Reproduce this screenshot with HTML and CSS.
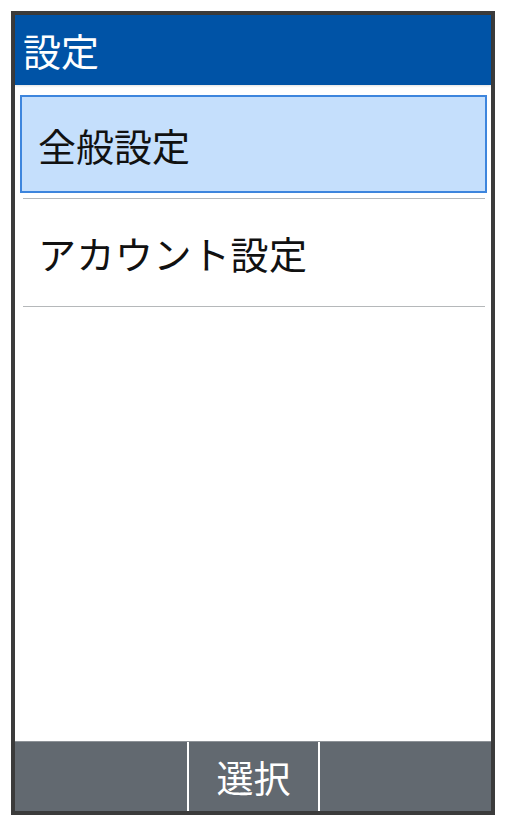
FILE: index.html
```html
<!DOCTYPE html>
<html lang="ja">
<head>
<meta charset="utf-8">
<link rel="stylesheet" href="styles.css">
</head>
<body>
<div class="frame">
  <div class="header">設定</div>
  <div class="list">
    <div class="item selected">全般設定</div>
    <div class="divider"></div>
    <div class="item">アカウント設定</div>
    <div class="divider"></div>
  </div>
  <div class="softkeys">
    <div class="key key-left"></div>
    <div class="key key-center">選択</div>
    <div class="key key-right"></div>
  </div>
</div>
</body>
</html>
```

FILE: styles.css
```css
html, body {
  margin: 0;
  padding: 0;
  background: #ffffff;
}
body {
  font-family: "Noto Sans CJK JP", "Noto Sans", sans-serif;
}
.frame {
  box-sizing: border-box;
  margin: 11px 0 0 11px;
  width: 484px;
  height: 804px;
  border: 4px solid #3b3b3b;
  display: flex;
  flex-direction: column;
  background: #ffffff;
}
.header {
  height: 70px;
  flex: none;
  background: #0053a6;
  color: #ffffff;
  font-size: 38px;
  line-height: 70px;
  padding-left: 8px;
  box-shadow: 0 1px 2px rgba(0,0,0,0.12);
}
.list {
  flex: 1;
  padding-top: 10px;
}
.item {
  color: #111111;
  font-size: 38px;
  display: flex;
  align-items: center;
}
.item.selected {
  box-sizing: border-box;
  height: 98px;
  margin: 0 4px 0 5px;
  border: 2px solid #3d85dd;
  background: #c5dffc;
  padding-left: 16px;
}
.item.plain {
  height: 107px;
}
.item:not(.selected) {
  height: 107px;
  padding-left: 23px;
  letter-spacing: 0.5px;
}
.divider {
  height: 1px;
  background: #b5b8ba;
  margin: 0 6px 0 8px;
}
.selected + .divider {
  margin-top: 5px;
}
.softkeys {
  flex: none;
  height: 70px;
  display: flex;
  background: #626970;
  border-top: 1px solid #8d9297;
  box-sizing: border-box;
}
.key {
  color: #ffffff;
  font-size: 37px;
  display: flex;
  align-items: center;
  justify-content: center;
}
.key-left {
  width: 172px;
  border-right: 2px solid #ffffff;
}
.key-center {
  width: 129px;
  border-right: 2px solid #ffffff;
}
.key-right {
  flex: 1;
}
```
